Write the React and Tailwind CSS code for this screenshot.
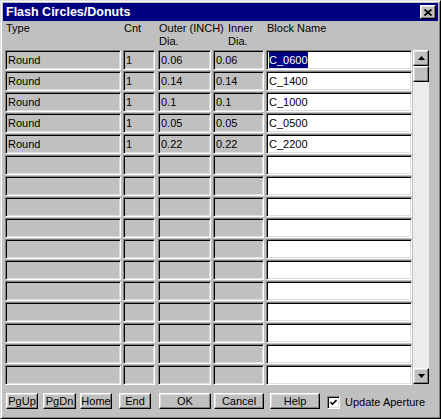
import React from 'react';

const rows = [
  { type: 'Round', cnt: '1', outer: '0.06', inner: '0.06', block: 'C_0600' },
  { type: 'Round', cnt: '1', outer: '0.14', inner: '0.14', block: 'C_1400' },
  { type: 'Round', cnt: '1', outer: '0.1', inner: '0.1', block: 'C_1000' },
  { type: 'Round', cnt: '1', outer: '0.05', inner: '0.05', block: 'C_0500' },
  { type: 'Round', cnt: '1', outer: '0.22', inner: '0.22', block: 'C_2200' },
];

// pad out to 16 visible rows
const allRows = [...rows, ...Array.from({ length: 11 }, () => null)];

const sunken =
  'border border-t-[#808080] border-l-[#808080] border-r-white border-b-white shadow-[inset_1px_1px_0_#000,inset_-1px_-1px_0_#dfdfdf]';
const raised =
  'border border-t-white border-l-white border-r-black border-b-black shadow-[inset_-1px_-1px_0_#808080,inset_1px_1px_0_#dfdfdf]';

const Field = ({ className, white, children }) => (
  <div
    className={`${className} h-[20px] ${sunken} ${white ? 'bg-white' : 'bg-[#c0c0c0]'} flex items-center pl-[2px] overflow-hidden whitespace-nowrap`}
  >
    {children}
  </div>
);

const Button = ({ className, children }) => (
  <div className={`${className} h-[16px] ${raised} bg-[#c0c0c0] flex items-center justify-center`}>
    {children}
  </div>
);

const Arrow = ({ down }) => (
  <svg width="7" height="4" viewBox="0 0 7 4">
    {down ? <path d="M0 0h7L3.5 4z" fill="#000" /> : <path d="M3.5 0L7 4H0z" fill="#000" />}
  </svg>
);

export default function App() {
  return (
    <div
      className="w-[441px] h-[419px] bg-[#c0c0c0] p-[2px] border border-t-[#dfdfdf] border-l-[#dfdfdf] border-r-black border-b-black shadow-[inset_1px_1px_0_#fff,inset_-1px_-1px_0_#808080] text-[11px] text-black"
      style={{ fontFamily: '"Liberation Sans", Arial, sans-serif' }}
    >
      {/* Title bar */}
      <div className="h-[18px] bg-[#000080] flex items-center justify-between pl-[3px] pr-[2px]">
        <span className="text-white font-bold text-[12.5px]">Flash Circles/Donuts</span>
        <div className={`w-[16px] h-[14px] ${raised} bg-[#c0c0c0] flex items-center justify-center`}>
          <svg width="8" height="7" viewBox="0 0 8 7">
            <path d="M0.5 0.5L7.5 6.5M7.5 0.5L0.5 6.5" stroke="#000" strokeWidth="1.8" />
          </svg>
        </div>
      </div>

      {/* Column headers */}
      <div className="h-[29px] flex pt-[1px] leading-[13px] whitespace-nowrap">
        <div className="ml-[2px] w-[116px] pl-[1px]">Type</div>
        <div className="ml-[2px] w-[32px] pl-[1px]">Cnt</div>
        <div className="ml-[3px] w-[53px] pl-[1px]">
          <div>Outer (INCH)</div>
          <div>Dia.</div>
        </div>
        <div className="ml-[2px] w-[51px] pl-[15px]">
          <div>Inner</div>
          <div>Dia.</div>
        </div>
        <div className="ml-[2px] w-[146px] pl-[1px]">Block Name</div>
      </div>

      {/* Grid + scrollbar */}
      <div className="flex">
        <div className="flex flex-col">
          {allRows.map((r, i) => (
            <div key={i} className="flex mb-[1px]">
              <Field className="ml-[2px] w-[116px]">{r?.type}</Field>
              <Field className="ml-[2px] w-[32px]">{r?.cnt}</Field>
              <Field className="ml-[3px] w-[53px]">{r?.outer}</Field>
              <Field className="ml-[2px] w-[51px]">{r?.inner}</Field>
              <Field white className="ml-[2px] w-[146px]">
                {i === 0 ? (
                  <span className="bg-[#000080] text-white">{r.block}</span>
                ) : (
                  r?.block
                )}
              </Field>
            </div>
          ))}
        </div>
        <div className="ml-[1px] w-[16px] h-[334px] bg-[#ececec] flex flex-col justify-between">
          <div>
            <div className={`w-[16px] h-[16px] ${raised} bg-[#c0c0c0] flex items-center justify-center`}>
              <Arrow />
            </div>
            <div className={`w-[16px] h-[16px] ${raised} bg-[#c0c0c0]`} />
          </div>
          <div className={`w-[16px] h-[16px] ${raised} bg-[#c0c0c0] flex items-center justify-center`}>
            <Arrow down />
          </div>
        </div>
      </div>

      {/* Bottom buttons */}
      <div className="flex items-center mt-[6px]">
        <Button className="ml-[3px] w-[32px]">PgUp</Button>
        <Button className="ml-[5px] w-[33px]">PgDn</Button>
        <Button className="ml-[4px] w-[32px]">Home</Button>
        <Button className="ml-[7px] w-[32px]">End</Button>
        <Button className="ml-[8px] w-[52px]">OK</Button>
        <Button className="ml-[3px] w-[50px]">Cancel</Button>
        <Button className="ml-[6px] w-[50px]">Help</Button>
        <div className={`ml-[7px] mt-[2px] w-[13px] h-[13px] ${sunken} bg-white flex items-center justify-center`}>
          <svg width="7" height="7" viewBox="0 0 7 7">
            <path d="M0.5 3L2.5 5.2L6.5 1" stroke="#000" strokeWidth="1.6" fill="none" />
          </svg>
        </div>
        <span className="ml-[5px] mt-[2px]">Update Aperture</span>
      </div>
    </div>
  );
}
